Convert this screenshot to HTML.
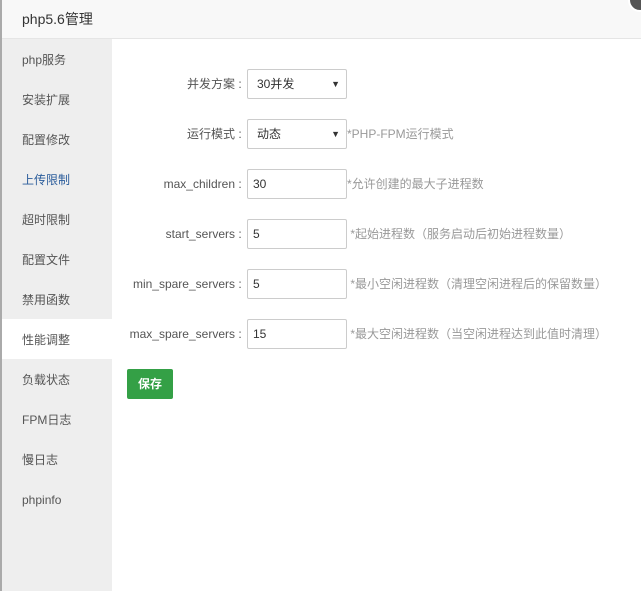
<!DOCTYPE html>
<html><head><meta charset="utf-8"><style>
*{box-sizing:border-box;margin:0;padding:0}
body{width:641px;height:591px;overflow:hidden;background:#fff;font-family:"Liberation Sans","Noto Sans CJK SC",sans-serif;font-size:12px;color:#333;position:relative}
.lb{position:absolute;left:0;top:0;width:2px;height:591px;background:#aaa}
.hd{position:absolute;left:2px;top:0;right:0;height:39px;background:#f8f8f8;border-bottom:1px solid #e5e5e5;font-size:14px;line-height:38px;padding-left:20px;color:#333}
.close{position:absolute;left:628px;top:-12px;width:24px;height:24px;border-radius:50%;background:#555;border:2px solid #fff}
.sb{position:absolute;left:2px;top:39px;width:110px;height:552px;background:#eee}
.sb div{height:40px;line-height:42px;padding-left:20px;color:#555}
.sb .on{background:#fff}
.sb .bl{color:#2a5c9b}
.row{position:absolute;left:112px;height:30px;width:529px}
.row .l{position:absolute;right:396px;top:0;line-height:30px;color:#555;white-space:nowrap}
.box{position:absolute;left:135px;top:0;width:100px;height:30px;border:1px solid #ccc;border-radius:2px;line-height:28px;padding-left:9px;color:#333;font-size:12px}
.box .ar{position:absolute;right:6px;top:0;font-size:9px}
.h{position:absolute;left:235px;top:0;line-height:30px;color:#999;white-space:nowrap}
.btn{position:absolute;left:127px;top:369px;width:46px;height:30px;background:#34a046;border-radius:2px;color:#fff;font-weight:bold;line-height:30px;text-align:center}
</style></head><body>
<div class="lb"></div>
<div class="hd">php5.6管理</div>
<div class="close"></div>
<div class="sb">
<div>php服务</div><div>安装扩展</div><div>配置修改</div><div class="bl">上传限制</div><div>超时限制</div><div>配置文件</div><div>禁用函数</div><div class="on">性能调整</div><div>负载状态</div><div>FPM日志</div><div>慢日志</div><div>phpinfo</div>
</div>
<div class="row" style="top:69px"><span class="l">并发方案&nbsp;:&nbsp;</span><div class="box">30并发<span class="ar">▼</span></div></div>
<div class="row" style="top:119px"><span class="l">运行模式&nbsp;:&nbsp;</span><div class="box">动态<span class="ar">▼</span></div><span class="h">*PHP-FPM运行模式</span></div>
<div class="row" style="top:169px"><span class="l">max_children&nbsp;:&nbsp;</span><div class="box" style="padding-left:5px">30</div><span class="h">*允许创建的最大子进程数</span></div>
<div class="row" style="top:219px"><span class="l">start_servers&nbsp;:&nbsp;</span><div class="box" style="padding-left:5px">5</div><span class="h">&nbsp;*起始进程数（服务启动后初始进程数量）</span></div>
<div class="row" style="top:269px"><span class="l">min_spare_servers&nbsp;:&nbsp;</span><div class="box" style="padding-left:5px">5</div><span class="h">&nbsp;*最小空闲进程数（清理空闲进程后的保留数量）</span></div>
<div class="row" style="top:319px"><span class="l">max_spare_servers&nbsp;:&nbsp;</span><div class="box" style="padding-left:5px">15</div><span class="h">&nbsp;*最大空闲进程数（当空闲进程达到此值时清理）</span></div>
<div class="btn">保存</div>
</body></html>
